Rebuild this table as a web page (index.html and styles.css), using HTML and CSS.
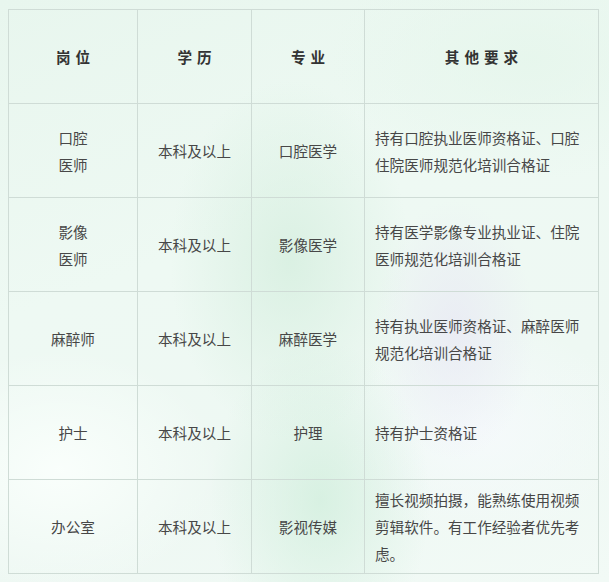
FILE: index.html
```html
<!DOCTYPE html>
<html lang="zh-CN">
<head>
<meta charset="utf-8">
<title>招聘岗位</title>
<link rel="stylesheet" href="styles.css">
</head>
<body>
<div class="page">
  <table class="jobs">
    <colgroup>
      <col class="c1"><col class="c2"><col class="c3"><col class="c4">
    </colgroup>
    <thead>
      <tr>
        <th>岗位</th>
        <th>学历</th>
        <th>专业</th>
        <th>其他要求</th>
      </tr>
    </thead>
    <tbody>
      <tr>
        <td>口腔<br>医师</td>
        <td>本科及以上</td>
        <td>口腔医学</td>
        <td class="req">持有口腔执业医师资格证、口腔住院医师规范化培训合格证</td>
      </tr>
      <tr>
        <td>影像<br>医师</td>
        <td>本科及以上</td>
        <td>影像医学</td>
        <td class="req">持有医学影像专业执业证、住院医师规范化培训合格证</td>
      </tr>
      <tr>
        <td>麻醉师</td>
        <td>本科及以上</td>
        <td>麻醉医学</td>
        <td class="req">持有执业医师资格证、麻醉医师规范化培训合格证</td>
      </tr>
      <tr>
        <td>护士</td>
        <td>本科及以上</td>
        <td>护理</td>
        <td class="req">持有护士资格证</td>
      </tr>
      <tr>
        <td>办公室</td>
        <td>本科及以上</td>
        <td>影视传媒</td>
        <td class="req">擅长视频拍摄，能熟练使用视频剪辑软件。有工作经验者优先考虑。</td>
      </tr>
    </tbody>
  </table>
</div>
</body>
</html>
```
FILE: styles.css
```css
html, body {
  margin: 0;
  padding: 0;
}
body {
  width: 609px;
  height: 582px;
  overflow: hidden;
  background-color: #ecf8f1;
  background-image:
    radial-gradient(ellipse 80px 130px at 455px 330px, rgba(232, 231, 244, 0.7), rgba(232, 231, 244, 0) 100%),
    radial-gradient(ellipse 120px 180px at 290px 260px, rgba(210, 237, 220, 0.7), rgba(210, 237, 220, 0) 100%),
    radial-gradient(ellipse 110px 160px at 320px 500px, rgba(208, 238, 220, 0.75), rgba(208, 238, 220, 0) 100%),
    radial-gradient(ellipse 160px 120px at 60px 470px, rgba(250, 255, 252, 0.95), rgba(250, 255, 252, 0) 100%),
    radial-gradient(ellipse 150px 110px at 480px 430px, rgba(246, 250, 252, 0.9), rgba(246, 250, 252, 0) 100%),
    radial-gradient(ellipse 200px 120px at 530px 60px, rgba(230, 246, 236, 0.9), rgba(230, 246, 236, 0) 100%),
    linear-gradient(160deg, #e8f6ee 0%, #eef9f3 40%, #eef8f3 70%, #f2faf6 100%);
  font-family: "Noto Sans CJK SC", "Noto Sans", sans-serif;
  color: #474747;
}
.page {
  padding: 9px 0 0 8px;
}
.jobs {
  border-collapse: collapse;
  table-layout: fixed;
  width: 590px;
  font-size: 14.6px;
}
.c1 { width: 129px; }
.c2 { width: 114px; }
.c3 { width: 113px; }
.c4 { width: 234px; }
.jobs th,
.jobs td {
  border: 1px solid #cfdcd6;
  height: 93px;
  padding: 0 10px;
  text-align: center;
  vertical-align: middle;
  line-height: 27px;
  font-weight: 400;
}
.jobs th {
  font-weight: 700;
  color: #333;
  letter-spacing: 5px;
  text-indent: 5px;
}
.jobs td.req {
  text-align: left;
  padding: 0 12px 0 10px;
}
```
